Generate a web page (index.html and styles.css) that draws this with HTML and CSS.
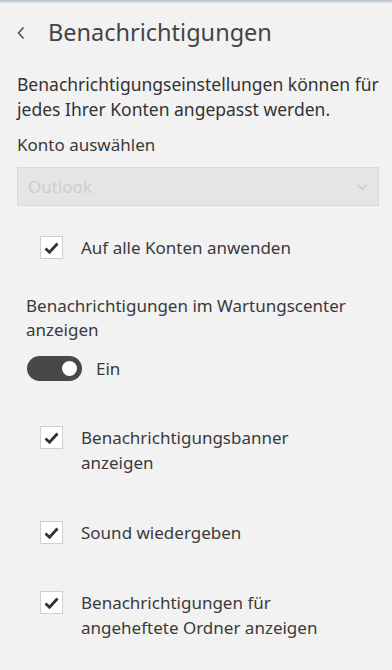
FILE: index.html
```html
<!DOCTYPE html>
<html lang="de">
<head>
<meta charset="utf-8">
<link rel="stylesheet" href="styles.css">
</head>
<body>
<div class="topline"></div>
<div class="header">
  <svg class="back" width="10" height="14" viewBox="0 0 10 14"><path d="M7.5 1.5 L2.5 7 L7.5 12.5" fill="none" stroke="#444" stroke-width="1.4"/></svg>
  <span class="title">Benachrichtigungen</span>
</div>
<p class="desc">Benachrichtigungseinstellungen können für jedes Ihrer Konten angepasst werden.</p>
<div class="label">Konto auswählen</div>
<div class="select">
  <span class="select-text">Outlook</span>
  <svg class="select-chev" width="12" height="8" viewBox="0 0 12 8"><path d="M1 1.5 L6 6 L11 1.5" fill="none" stroke="#c8c8c8" stroke-width="1.3"/></svg>
</div>
<div class="check first">
  <span class="box"><svg width="15" height="12" viewBox="0 0 15 12"><path d="M1.5 6.5 L5.5 10.3 L13.5 1.5" fill="none" stroke="#333" stroke-width="2.8"/></svg></span>
  <span class="check-text">Auf alle Konten anwenden</span>
</div>
<div class="section">Benachrichtigungen im Wartungscenter anzeigen</div>
<div class="toggle-row">
  <span class="toggle"><span class="knob"></span></span>
  <span class="toggle-text">Ein</span>
</div>
<div class="check second">
  <span class="box"><svg width="15" height="12" viewBox="0 0 15 12"><path d="M1.5 6.5 L5.5 10.3 L13.5 1.5" fill="none" stroke="#333" stroke-width="2.8"/></svg></span>
  <span class="check-text">Benachrichtigungsbanner<br>anzeigen</span>
</div>
<div class="check third">
  <span class="box"><svg width="15" height="12" viewBox="0 0 15 12"><path d="M1.5 6.5 L5.5 10.3 L13.5 1.5" fill="none" stroke="#333" stroke-width="2.8"/></svg></span>
  <span class="check-text">Sound wiedergeben</span>
</div>
<div class="check fourth">
  <span class="box"><svg width="15" height="12" viewBox="0 0 15 12"><path d="M1.5 6.5 L5.5 10.3 L13.5 1.5" fill="none" stroke="#333" stroke-width="2.8"/></svg></span>
  <span class="check-text">Benachrichtigungen für<br>angeheftete Ordner anzeigen</span>
</div>
</body>
</html>
```
FILE: styles.css
```css
html, body {
  margin: 0;
  padding: 0;
}
body {
  background: #f2f2f2;
  font-family: "Noto Sans", "Open Sans", sans-serif;
  color: #3c3c3c;
  width: 392px;
  height: 670px;
  overflow: hidden;
}
.topline {
  height: 3px;
  background: linear-gradient(#b9c1c9, #dfe5ea);
}
.header {
  height: 57px;
  display: flex;
  align-items: center;
  padding-left: 16px;
}
.back {
  display: block;
  position: relative;
  top: 1px;
}
.title {
  margin-left: 22px;
  font-size: 23.5px;
  color: #444;
  font-weight: 400;
}
.desc {
  margin: 12px 0 0 17px;
  font-size: 17.5px;
  line-height: 25px;
  width: 374px;
  color: #333;
}
.label {
  margin: 11px 0 0 17px;
  font-size: 17px;
  line-height: 24px;
  color: #3a3a3a;
}
.select {
  margin: 10px 0 0 17px;
  height: 37px;
  background: #e5e5e5;
  border: 1px solid #dadada;
  display: flex;
  align-items: center;
  justify-content: space-between;
  padding: 0 10px 0 10px;
  box-sizing: content-box;
  width: 340px;
}
.select-text {
  font-size: 17px;
  color: #cdcdcd;
}
.check {
  display: flex;
  align-items: flex-start;
  padding-left: 40px;
}
.check.first { margin-top: 29px; align-items: center; }
.check.second { margin-top: 45px; }
.check.third { margin-top: 45px; align-items: center; }
.check.fourth { margin-top: 46px; }
.box {
  width: 21px;
  height: 21px;
  border: 1px solid #cfcfcf;
  background: #fff;
  display: flex;
  align-items: center;
  justify-content: center;
  flex: none;
}
.check-text {
  margin-left: 18px;
  font-size: 17px;
  line-height: 25px;
  color: #3a3a3a;
  margin-top: -1px;
}
.check.first .check-text, .check.third .check-text { margin-top: 0; }
.section {
  margin: 34px 0 0 26px;
  font-size: 17px;
  line-height: 24px;
  width: 340px;
  color: #3a3a3a;
}
.toggle-row {
  margin: 14px 0 0 27px;
  display: flex;
  align-items: center;
}
.toggle {
  width: 55px;
  height: 25px;
  border-radius: 13px;
  background: #484848;
  display: flex;
  align-items: center;
  justify-content: flex-end;
  padding-right: 5px;
  box-sizing: border-box;
}
.knob {
  width: 15px;
  height: 15px;
  border-radius: 50%;
  background: #fff;
}
.toggle-text {
  margin-left: 14px;
  font-size: 17px;
  color: #3a3a3a;
}
```
